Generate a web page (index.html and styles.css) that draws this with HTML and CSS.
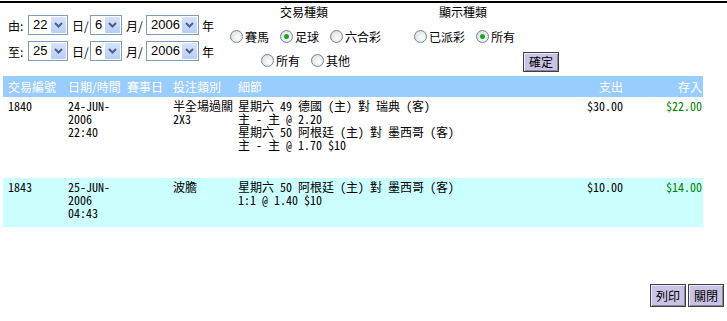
FILE: index.html
```html
<!DOCTYPE html>
<html lang="zh-Hant">
<head>
    <meta charset="utf-8">
    <link rel="stylesheet" href="styles.css">
</head>
<body>
    <div class="rule"></div>

    <!-- filter panel -->
    <div class="filters">
        <div class="dates">
            <div class="date-row">
                <span class="lbl">由:</span>
                <span class="sel w-day"><span class="val">22</span><span class="arr"><svg width="15" height="16"><polyline points="4,6 7.5,9.5 11,6" fill="none" stroke="#4d6185" stroke-width="2"/></svg></span></span>
                <span class="unit u1">日/</span>
                <span class="sel w-mon"><span class="val">6</span><span class="arr"><svg width="15" height="16"><polyline points="4,6 7.5,9.5 11,6" fill="none" stroke="#4d6185" stroke-width="2"/></svg></span></span>
                <span class="unit u2">月/</span>
                <span class="sel w-yr"><span class="val">2006</span><span class="arr"><svg width="15" height="16"><polyline points="4,6 7.5,9.5 11,6" fill="none" stroke="#4d6185" stroke-width="2"/></svg></span></span>
                <span class="unit u3">年</span>
            </div>
            <div class="date-row">
                <span class="lbl">至:</span>
                <span class="sel w-day"><span class="val">25</span><span class="arr"><svg width="15" height="16"><polyline points="4,6 7.5,9.5 11,6" fill="none" stroke="#4d6185" stroke-width="2"/></svg></span></span>
                <span class="unit u1">日/</span>
                <span class="sel w-mon"><span class="val">6</span><span class="arr"><svg width="15" height="16"><polyline points="4,6 7.5,9.5 11,6" fill="none" stroke="#4d6185" stroke-width="2"/></svg></span></span>
                <span class="unit u2">月/</span>
                <span class="sel w-yr"><span class="val">2006</span><span class="arr"><svg width="15" height="16"><polyline points="4,6 7.5,9.5 11,6" fill="none" stroke="#4d6185" stroke-width="2"/></svg></span></span>
                <span class="unit u3">年</span>
            </div>
        </div>

        <div class="group types">
            <div class="title">交易種類</div>
            <div class="opts">
                <span class="opt"><span class="radio"></span>賽馬</span>
                <span class="opt"><span class="radio on"></span>足球</span>
                <span class="opt"><span class="radio"></span>六合彩</span>
            </div>
            <div class="opts row2">
                <span class="opt"><span class="radio"></span>所有</span>
                <span class="opt"><span class="radio"></span>其他</span>
            </div>
        </div>

        <div class="group show">
            <div class="title">顯示種類</div>
            <div class="opts">
                <span class="opt"><span class="radio"></span>已派彩</span>
                <span class="opt"><span class="radio on"></span>所有</span>
            </div>
        </div>

        <div class="confirm">
            <button class="btn">確定</button>
        </div>
    </div>

    <!-- transactions -->
    <div class="records">
        <div class="rec head">
            <div>交易編號</div>
            <div>日期/時間</div>
            <div>賽事日</div>
            <div>投注類別</div>
            <div>細節</div>
            <div class="num">支出</div>
            <div class="num last">存入</div>
        </div>
        <div class="rec r1">
            <div>1840</div>
            <div>24-JUN-<br>2006<br>22:40</div>
            <div></div>
            <div>半全場過關<br>2X3</div>
            <div>星期六 49 德國 (主) 對 瑞典 (客)<br>主 - 主 @ 2.20<br>星期六 50 阿根廷 (主) 對 墨西哥 (客)<br>主 - 主 @ 1.70 $10</div>
            <div class="num">$30.00</div>
            <div class="num last credit">$22.00</div>
        </div>
        <div class="rec r2">
            <div>1843</div>
            <div>25-JUN-<br>2006<br>04:43</div>
            <div></div>
            <div>波膽</div>
            <div>星期六 50 阿根廷 (主) 對 墨西哥 (客)<br>1:1 @ 1.40 $10</div>
            <div class="num">$10.00</div>
            <div class="num last credit">$14.00</div>
        </div>
    </div>

    <div class="actions">
        <button class="btn">列印</button>
        <button class="btn">關閉</button>
    </div>
</body>
</html>
```

FILE: styles.css
```css
body {
    margin: 0;
    background: #fff;
    color: #000;
    font-family: "Noto Sans CJK TC", "Liberation Sans", sans-serif;
    font-size: 12px;
    line-height: 13px;
}

.rule {
    margin-top: 1px;
    height: 2px;
    background: #000;
}

/* filter panel */
.filters {
    display: flex;
    height: 73px;
}

.dates {
    padding: 12px 0 0 8px;
}

.date-row {
    display: flex;
    align-items: center;
    height: 20px;
    margin-bottom: 6px;
}

.lbl {
    width: 20px;
}

.sel {
    display: flex;
    box-sizing: border-box;
    height: 20px;
    border: 1px solid #7f9db9;
    padding: 1px;
    background: #fff;
}

.sel .val {
    flex: 1;
    padding-left: 3px;
    font-family: "Liberation Sans", sans-serif;
    font-size: 13px;
    line-height: 16px;
}

.sel .arr {
    width: 15px;
    height: 16px;
    background: linear-gradient(#d7e3fc, #b8cdf8);
    border-radius: 1px;
}

.sel .arr svg {
    display: block;
}

.w-day { width: 40px; }
.w-mon { width: 32px; }
.w-yr  { width: 53px; }

.unit { padding-left: 4px; }
.u1 { width: 18px; }
.u2 { width: 20px; }
.u3 { padding-left: 3px; }

.group {
    display: flex;
    flex-direction: column;
    align-items: center;
    flex-shrink: 0;
    padding-top: 2px;
}

.types {
    margin-left: 13px;
    width: 154px;
}

.show {
    margin-left: 30px;
    width: 104px;
}

.opts {
    display: flex;
    gap: 8px;
    margin-top: 12px;
    white-space: nowrap;
}

.opts.row2 {
    margin-top: 11px;
}

.opt {
    display: inline-flex;
    align-items: center;
    flex-shrink: 0;
}

.radio {
    box-sizing: border-box;
    width: 13px;
    height: 13px;
    margin: 0 2px 0 3px;
    border: 1px solid #6b84ad;
    border-radius: 50%;
    background: radial-gradient(circle at 60% 60%, #fff 0, #e8e8e4 55%, #d0d0cc 100%);
    position: relative;
}

.radio.on::after {
    content: "";
    position: absolute;
    left: 3px;
    top: 3px;
    width: 5px;
    height: 5px;
    border-radius: 50%;
    background: #21a121;
}

.confirm {
    margin-left: 8px;
    padding-top: 49px;
}

.btn {
    box-sizing: border-box;
    height: 20px;
    padding: 0 5px;
    font-family: "Noto Sans CJK TC", sans-serif;
    font-size: 12px;
    line-height: 16px;
    color: #000;
    background: #cbc3e5;
    border: 1px solid #404040;
    box-shadow: inset 1px 1px #ece8f8, inset -1px -1px #8c86a4;
}

/* transaction table */
.records {
    margin-left: 3px;
    width: 700px;
}

.rec {
    display: grid;
    grid-template-columns: 60px 59px 46px 65px 1fr 80px 80px;
}

.rec > div {
    padding-left: 5px;
}

.rec .num {
    text-align: right;
    padding-left: 0;
}

.rec .last {
    padding-right: 1px;
}

.head {
    height: 21px;
    line-height: 21px;
    background: #99ccff;
    color: #fff;
}

.r1, .r2 {
    font-family: "Noto Sans Mono CJK TC", "Noto Sans CJK TC", monospace;
    padding-top: 2px;
    box-sizing: border-box;
}

.r1 {
    height: 81px;
    background: #fff;
}

.r2 {
    height: 49px;
    background: #ccffff;
}

.credit {
    color: #008000;
}

.actions {
    display: flex;
    justify-content: flex-end;
    gap: 2px;
    margin-top: 57px;
    padding-right: 3px;
}

.actions .btn {
    height: 23px;
}
```
